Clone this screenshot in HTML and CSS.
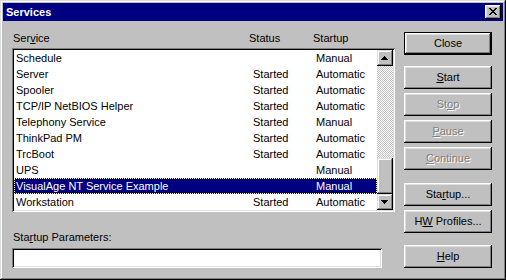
FILE: index.html
```html
<!DOCTYPE html>
<html>
<head>
<meta charset="utf-8">
<title>Services</title>
<link rel="stylesheet" href="styles.css">
</head>
<body>
<div class="window">
  <div class="titlebar">
    <span class="title">Services</span>
    <button class="tb-close" aria-label="Close"><svg width="8" height="7" viewBox="0 0 8 7" shape-rendering="crispEdges"><path d="M0 0h2v1H0zM6 0h2v1H6zM1 1h2v1H1zM5 1h2v1H5zM2 2h4v1H2zM3 3h2v1H3zM2 4h4v1H2zM1 5h2v1H1zM5 5h2v1H5zM0 6h2v1H0zM6 6h2v1H6z"/></svg></button>
  </div>
  <div class="content">
    <div class="left">
      <div class="cols head"><span>Ser<u>v</u>ice</span><span>Status</span><span>Startup</span></div>
      <div class="listbox">
        <div class="rows">
          <div class="cols row"><span>Schedule</span><span></span><span>Manual</span></div>
          <div class="cols row"><span>Server</span><span>Started</span><span>Automatic</span></div>
          <div class="cols row"><span>Spooler</span><span>Started</span><span>Automatic</span></div>
          <div class="cols row"><span>TCP/IP NetBIOS Helper</span><span>Started</span><span>Automatic</span></div>
          <div class="cols row"><span>Telephony Service</span><span>Started</span><span>Manual</span></div>
          <div class="cols row"><span>ThinkPad PM</span><span>Started</span><span>Automatic</span></div>
          <div class="cols row"><span>TrcBoot</span><span>Started</span><span>Automatic</span></div>
          <div class="cols row"><span>UPS</span><span></span><span>Manual</span></div>
          <div class="cols row sel"><span>VisualAge NT Service Example</span><span></span><span>Manual</span></div>
          <div class="cols row"><span>Workstation</span><span>Started</span><span>Automatic</span></div>
        </div>
        <div class="scrollbar">
          <div class="sb-btn"><svg width="7" height="4" viewBox="0 0 7 4" shape-rendering="crispEdges"><path d="M3 0h1v1H3zM2 1h3v1H2zM1 2h5v1H1zM0 3h7v1H0z"/></svg></div>
          <div class="track"><div class="thumb"></div></div>
          <div class="sb-btn"><svg width="7" height="4" viewBox="0 0 7 4" shape-rendering="crispEdges"><path d="M0 0h7v1H0zM1 1h5v1H1zM2 2h3v1H2zM3 3h1v1H3z"/></svg></div>
        </div>
      </div>
      <div class="param-label">Sta<u>r</u>tup Parameters:</div>
      <div class="input"></div>
    </div>
    <div class="buttons">
      <button class="btn default">Close</button>
      <button class="btn gap-lg"><u>S</u>tart</button>
      <button class="btn disabled">St<u>o</u>p</button>
      <button class="btn disabled"><u>P</u>ause</button>
      <button class="btn disabled"><u>C</u>ontinue</button>
      <button class="btn gap-xl">Sta<u>r</u>tup...</button>
      <button class="btn">H<u>W</u> Profiles...</button>
      <button class="btn gap-lg2"><u>H</u>elp</button>
    </div>
  </div>
</div>
</body>
</html>
```

FILE: styles.css
```css
* { box-sizing: border-box; }
html, body { margin: 0; padding: 0; }
body {
  width: 506px;
  height: 280px;
  overflow: hidden;
  background: #c0c0c0;
  font-family: "Liberation Sans", Arial, sans-serif;
  font-size: 11px;
  color: #000;
}
.window {
  width: 506px;
  height: 280px;
  padding: 3px;
  background: #c0c0c0;
  box-shadow: inset -1px -1px #000, inset 1px 1px #dfdfdf, inset -2px -2px #808080, inset 2px 2px #fff;
  display: flex;
  flex-direction: column;
}
.titlebar {
  height: 18px;
  background: #000080;
  color: #fff;
  display: flex;
  align-items: center;
  justify-content: space-between;
  padding: 0 2px 0 3px;
}
.title { font-weight: bold; line-height: 18px; }
.tb-close {
  width: 16px;
  height: 14px;
  padding: 0 0 0 0;
  border: 0;
  background: #c0c0c0;
  box-shadow: inset -1px -1px #000, inset 1px 1px #fff, inset -2px -2px #808080, inset 2px 2px #dfdfdf;
  display: flex;
  align-items: center;
  justify-content: center;
}
.tb-close svg { fill: #000; margin-left: -1px; margin-top: -1px; }
.content {
  display: flex;
  padding: 11px 0 0 9px;
}
.left {
  width: 383px;
  display: flex;
  flex-direction: column;
}
.cols {
  display: grid;
  grid-template-columns: 237px 63px 1fr;
  white-space: nowrap;
}
.head {
  height: 16px;
  line-height: 13px;
  padding-left: 1px;
  grid-template-columns: 236px 64px 1fr;
}
.listbox {
  height: 164px;
  display: flex;
  background: #fff;
  padding: 2px;
  box-shadow: inset 1px 1px #808080, inset -1px -1px #fff, inset 2px 2px #000, inset -2px -2px #dfdfdf;
}
.rows { flex: 1; }
.row {
  height: 16px;
  line-height: 16px;
  padding-left: 2px;
}
.row.sel {
  background: #000080;
  color: #fff;
  outline: 1px dotted #ffff80;
  outline-offset: -1px;
}
.scrollbar {
  width: 16px;
  display: flex;
  flex-direction: column;
}
.sb-btn {
  height: 16px;
  background: #c0c0c0;
  box-shadow: inset -1px -1px #000, inset 1px 1px #dfdfdf, inset -2px -2px #808080, inset 2px 2px #fff;
  display: flex;
  align-items: center;
  justify-content: center;
}
.sb-btn svg { fill: #000; margin-left: -1px; margin-top: -1px; }
.track {
  flex: 1;
  display: flex;
  flex-direction: column;
  justify-content: flex-end;
  background: repeating-conic-gradient(#c0c0c0 0 25%, #fff 0 50%) 0 0 / 2px 2px;
}
.thumb {
  height: 36px;
  background: #c0c0c0;
  box-shadow: inset -1px -1px #000, inset 1px 1px #dfdfdf, inset -2px -2px #808080, inset 2px 2px #fff;
}
.param-label {
  margin-top: 19px;
  line-height: 13px;
  padding-left: 1px;
}
.input {
  margin-top: 4px;
  width: 370px;
  height: 20px;
  background: #fff;
  box-shadow: inset 1px 1px #808080, inset -1px -1px #fff, inset 2px 2px #000, inset -2px -2px #dfdfdf;
}
.buttons {
  margin-left: 9px;
  width: 88px;
  display: flex;
  flex-direction: column;
  gap: 4px;
}
.btn {
  height: 23px;
  width: 88px;
  padding: 0;
  border: 0;
  background: #c0c0c0;
  font: inherit;
  color: #000;
  line-height: 23px;
  text-align: center;
  box-shadow: inset -1px -1px #000, inset 1px 1px #fff, inset -2px -2px #808080, inset 2px 2px #dfdfdf;
}
.btn.default {
  box-shadow: inset 0 0 0 1px #000, inset -2px -2px #000, inset 2px 2px #fff, inset -3px -3px #808080, inset 3px 3px #dfdfdf;
}
.btn.disabled {
  color: #808080;
  text-shadow: 1px 1px 0 #fff;
}
.gap-lg { margin-top: 7px; }
.gap-xl { margin-top: 9px; }
.gap-lg2 { margin-top: 8px; }
```
